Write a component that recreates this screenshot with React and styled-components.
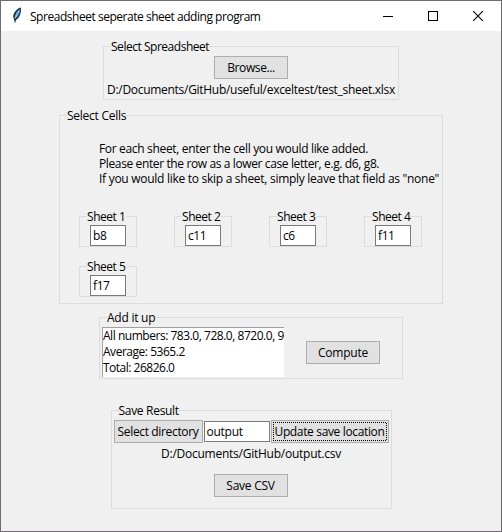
import React from "react";
import styled, { createGlobalStyle } from "styled-components";

const GlobalStyle = createGlobalStyle`
  * { box-sizing: border-box; }
  body { margin: 0; }
`;

const Window = styled.div`
  width: 502px;
  height: 532px;
  display: flex;
  flex-direction: column;
  background: #f0f0f0;
  border: 1px solid #6e6c6e;
  color: #000;
  font: 12px/15px "Open Sans", "Noto Sans", sans-serif;
  overflow: hidden;
`;

const TitleBar = styled.header`
  height: 30px;
  flex: none;
  display: flex;
  align-items: center;
  background: #fff;
  padding-left: 9px;
`;

const Title = styled.h1`
  margin: 0 auto 0 4px;
  font: inherit;
`;

const WindowControls = styled.div`
  display: flex;
  gap: 35px;
  margin-right: 18px;
  padding-bottom: 1px;
  svg { display: block; }
`;

const Text = styled.span`
  display: block;
  white-space: pre;
  letter-spacing: ${(p) => p.$track ?? -0.25}px;
`;

const Body = styled.main`
  display: flex;
  flex-direction: column;
  align-items: center;
  padding-top: 15px;
`;

const Group = styled.section`
  width: ${(p) => p.$w}px;
  height: ${(p) => p.$h}px;
  margin-bottom: ${(p) => p.$gap ?? 0}px;
  border: 1px solid #dcdcdc;
  display: flex;
  flex-direction: column;
  align-items: center;
`;

const Caption = styled.div`
  align-self: flex-start;
  flex: none;
  height: 15px;
  margin: -8px 0 0 7px;
  background: #f0f0f0;
`;

const Button = styled.button`
  width: ${(p) => p.$w ?? 74}px;
  height: 23px;
  flex: none;
  padding: 0;
  border: 1px solid #adadad;
  background: #e1e1e1;
  color: inherit;
  font: inherit;
  display: flex;
  align-items: center;
  justify-content: center;
  position: relative;
`;

const FocusRing = styled.svg`
  position: absolute;
  left: 1px;
  top: 1px;
`;

const Entry = styled.div`
  width: ${(p) => p.$w ?? 36}px;
  height: 21px;
  flex: none;
  border: 1px solid #7a7a7a;
  background: #fff;
  padding: 2px 0 0 2px;
`;

const PathLine = styled.div`
  margin-top: ${(p) => p.$top}px;
`;

const Instructions = styled.div`
  align-self: flex-start;
  margin: 18px 0 0 39px;
`;

const SheetGrid = styled.div`
  align-self: flex-start;
  display: grid;
  grid-template-columns: repeat(4, 58px);
  column-gap: 37px;
  row-gap: 19px;
  margin: 30px 0 0 19px;
`;

const SheetEntry = styled.div`
  margin-top: 1px;
`;

const Row = styled.div`
  align-self: flex-start;
  display: flex;
  align-items: center;
  gap: ${(p) => p.$gap}px;
  margin: ${(p) => p.$margin};
`;

const Output = styled.div`
  width: 182px;
  height: 50px;
  border-left: 1px solid #a0a0a0;
  border-top: 1px solid #a0a0a0;
  background: #fff;
  line-height: 16px;
  overflow: hidden;
`;

const Feather = () => (
  <svg width="16" height="18" viewBox="0 0 16 18">
    <path d="M10.800 0.500C7 1.500 3.500 5.500 3.200 9.500L4 12.500L5 16.500L5.900 13C9.500 11 11.500 6 10.800 0.500Z" fill="#16202c" />
    <path d="M10 1.900C7 3.500 4.700 7 4.400 10.500L5.200 11.600C8.500 9.500 10.300 6 10 1.900Z" fill="#4a8fd6" />
    <path d="M9 3.500L5 11.500" stroke="#a9d4f5" strokeWidth="0.900" />
  </svg>
);

const sheets = [
  ["Sheet 1", "b8"],
  ["Sheet 2", "c11"],
  ["Sheet 3", "c6"],
  ["Sheet 4", "f11"],
  ["Sheet 5", "f17"],
];

export default function App() {
  return (
    <Window>
      <GlobalStyle />
      <TitleBar>
        <Feather />
        <Title><Text $track={-0.47}>Spreadsheet seperate sheet adding program</Text></Title>
        <WindowControls>
          <svg width="10" height="10"><path d="M0 5.500H10" stroke="#000" /></svg>
          <svg width="10" height="10"><rect x="0.500" y="0.500" width="9" height="9" fill="none" stroke="#000" /></svg>
          <svg width="10" height="10"><path d="M0 0L10 10M10 0L0 10" stroke="#000" strokeWidth="1.100" /></svg>
        </WindowControls>
      </TitleBar>
      <Body>
        <Group $w={296} $h={54} $gap={15}>
          <Caption><Text $track={-0.47}>Select Spreadsheet</Text></Caption>
          <Row $gap={0} $margin="2px 0 0 110px"><Button><Text $track={-0.4}>Browse...</Text></Button></Row>
          <PathLine $top={3}><Text $track={-0.29}>D:/Documents/GitHub/useful/exceltest/test_sheet.xlsx</Text></PathLine>
        </Group>
        <Group $w={384} $h={189} $gap={13}>
          <Caption><Text>Select Cells</Text></Caption>
          <Instructions>
            <Text $track={-0.33}>For each sheet, enter the cell you would like added.</Text>
            <Text $track={-0.38}>Please enter the row as a lower case letter, e.g. d6, g8.</Text>
            <Text $track={-0.28}>If you would like to skip a sheet, simply leave that field as "none"</Text>
          </Instructions>
          <SheetGrid>
            {sheets.map(([name, cell]) => (
              <Group key={name} $w={58} $h={31}>
                <Caption><Text $track={-0.45}>{name}</Text></Caption>
                <SheetEntry><Entry><Text $track={-0.4}>{cell}</Text></Entry></SheetEntry>
              </Group>
            ))}
          </SheetGrid>
        </Group>
        <Group $w={304} $h={62} $gap={31}>
          <Caption><Text>Add it up</Text></Caption>
          <Row $gap={22} $margin="2px 0 0 2px">
            <Output>
              <Text $track={-0.47}>All numbers: 783.0, 728.0, 8720.0, 9</Text>
              <Text $track={-0.47}>Average: 5365.2</Text>
              <Text $track={-0.5}>Total: 26826.0</Text>
            </Output>
            <Button><Text>Compute</Text></Button>
          </Row>
        </Group>
        <Group $w={281} $h={99}>
          <Caption><Text $track={-0.3}>Save Result</Text></Caption>
          <Row $gap={1} $margin="2px 0 0 2px">
            <Button $w={89}><Text $track={-0.35}>Select directory</Text></Button>
            <Entry $w={66}><Text>output</Text></Entry>
            <Button $w={118}>
              <Text $track={-0.35}>Update save location</Text>
              <FocusRing width="114" height="19">
                <path
                  d="M0 0.500H114M0 18.500H114M0.500 0V19M113.500 1V19"
                  fill="none"
                  stroke="#000"
                  strokeDasharray="1 1"
                />
              </FocusRing>
            </Button>
          </Row>
          <PathLine $top={3}><Text>D:/Documents/GitHub/output.csv</Text></PathLine>
          <Row $gap={0} $margin="13px 0 0 102px"><Button><Text>Save CSV</Text></Button></Row>
        </Group>
      </Body>
    </Window>
  );
}
